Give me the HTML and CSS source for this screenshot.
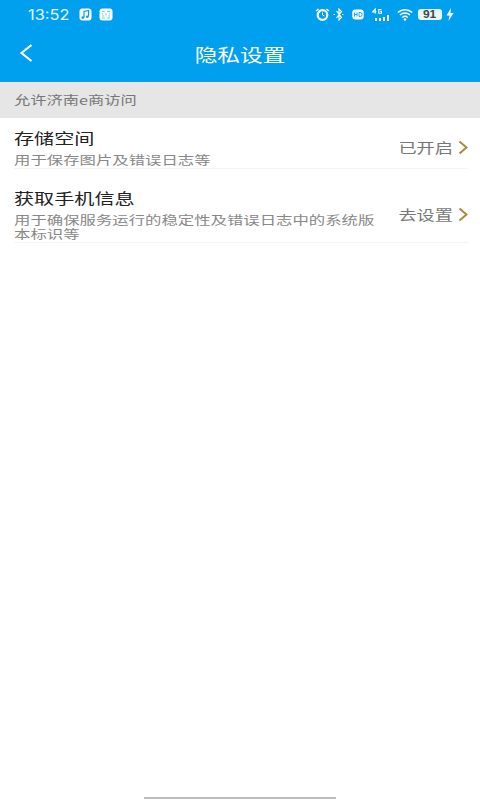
FILE: index.html
```html
<!DOCTYPE html>
<html lang="zh">
<head>
<meta charset="utf-8">
<title>隐私设置</title>
<link rel="stylesheet" href="styles.css">
</head>
<body>
<div class="phone">
  <header class="top">
    <div class="status">
      <div class="status-left">
        <span class="time">13:52</span>
        <svg class="ico" width="13" height="13" viewBox="0 0 13 13"><rect x=".5" y=".5" width="12" height="12" rx="3" fill="#fff"/><path d="M5 9.500V3.500l4.500-1v6" fill="none" stroke="#00a0ee" stroke-width="1.200"/><circle cx="3.800" cy="9.600" r="1.300" fill="#00a0ee"/><circle cx="8.300" cy="8.800" r="1.300" fill="#00a0ee"/></svg>
        <svg class="ico" width="14" height="13" viewBox="0 0 14 13"><rect x=".5" y=".5" width="13" height="12" rx="3" fill="#fff"/><path d="M3 3.500h3M8 3.500h3M3 6h1M6 6h2M10 6h1M3 8h2M6.500 8h1M9 8h2M3 10h3M8 10h3" stroke="#7fcdf5" stroke-width="1.100"/></svg>
      </div>
      <div class="status-right">
        <svg class="s-alarm" width="15" height="13" viewBox="0 0 15 13"><circle cx="7.500" cy="7" r="4.800" fill="none" stroke="#fff" stroke-width="2.200"/><path d="M7.500 4.500V7l2 1" fill="none" stroke="#fff"/><path d="M1 3l2.500-2M14 3l-2.500-2" stroke="#fff" stroke-width="1.500"/></svg>
        <svg class="s-bt" width="11" height="13" viewBox="0 0 11 13"><path d="M3.500 3l5 6.500L6 12V1l2.500 2.500L3.500 10" fill="none" stroke="#fff" stroke-width="1.200"/><path d="M.5 6.500h1.500M9 6.500h1.500" stroke="#fff" stroke-width="1.200"/></svg>
        <svg class="s-hd" width="12" height="11" viewBox="0 0 12 11"><rect x=".3" y=".5" width="11.400" height="10" rx="3" fill="#fff"/><path d="M2.500 3.500v4M2.500 5.500h2.500M5 3.500v4M7 3.500v4h1.200a2 2 0 0 0 0-4z" fill="none" stroke="#00a0ee" stroke-width=".9"/></svg>
        <svg class="s-net" width="19" height="13" viewBox="0 0 19 13"><path d="M4 10v3M8 10v3M12 9v4M16 7v6" stroke="#fff" stroke-width="2"/><path d="M3.200 5.500V1L.6 4h3.800M9.500 1.500H6.800v3.800h2.700V3.200H8" fill="none" stroke="#fff" stroke-width="1.100"/></svg>
        <svg class="s-wifi" width="16" height="13" viewBox="0 0 16 13"><path d="M.8 4.500a10.500 10.500 0 0 1 14.400 0M3 7a7.200 7.200 0 0 1 10 0M5.300 9.500a4 4 0 0 1 5.400 0" fill="none" stroke="#fff" stroke-width="1.500"/><circle cx="8" cy="11.500" r="1.300" fill="#fff"/></svg>
        <span class="battery"><span class="battery-num">91</span></span>
        <svg class="s-bolt" width="8" height="13" viewBox="0 0 8 13"><path d="M5 0 .5 7.500h3L2.500 13l5-8H4.500z" fill="#fff"/></svg>
      </div>
    </div>
    <div class="nav">
      <svg class="back" width="14" height="20" viewBox="0 0 14 20"><path d="M12.500 2 2.500 10l10 8" fill="none" stroke="#fff" stroke-width="2.200"/></svg>
      <h1 class="title">隐私设置</h1>
    </div>
  </header>
  <div class="section"><span class="section-text">允许济南e商访问</span></div>
  <ul class="list">
    <li class="row row-one">
      <div class="main">
        <div class="name">存储空间</div>
        <div class="desc">用于保存图片及错误日志等</div>
      </div>
      <div class="side"><span class="state">已开启</span><svg class="chev" width="10" height="15" viewBox="0 0 10 15"><path d="M1.500 1.500 8.500 7.500l-7 6" fill="none" stroke="#a58a45" stroke-width="2"/></svg></div>
    </li>
    <li class="row row-two">
      <div class="main">
        <div class="name">获取手机信息</div>
        <div class="desc">用于确保服务运行的稳定性及错误日志中的系统版本标识等</div>
      </div>
      <div class="side"><span class="state">去设置</span><svg class="chev" width="10" height="15" viewBox="0 0 10 15"><path d="M1.500 1.500 8.500 7.500l-7 6" fill="none" stroke="#a58a45" stroke-width="2"/></svg></div>
    </li>
  </ul>
  <div class="home"></div>
</div>
</body>
</html>
```
FILE: styles.css
```css
* { box-sizing: border-box; }
html, body { margin: 0; padding: 0; }
body { background: #fff; font-family: "Noto Sans CJK SC", "Noto Sans", sans-serif; }
.phone { width: 480px; height: 800px; position: relative; overflow: hidden; background: #fff; }
.top { background: #00a0ee; height: 82px; color: #fff; }
.status { height: 29px; display: flex; justify-content: space-between; align-items: center; padding: 0 26px 0 28px; }
.status-left { display: flex; align-items: center; gap: 7px; }
.time { font: 14px/16px "Inter", "Liberation Sans", sans-serif; margin-right: 1px; color: #e6f6ff; width: 43px; display: inline-block; transform: scaleX(1.17); transform-origin: left center; }
.status-right { display: flex; align-items: center; }
.s-bt { margin-left: 3px; }
.s-hd { margin-left: 8px; }
.s-net { margin-left: 8px; }
.s-wifi { margin-left: 6px; }
.battery { margin-left: 5px; width: 24px; height: 11px; background: #e9f6fd; border-radius: 3px; display: flex; align-items: center; justify-content: center; }
.s-bolt { margin-left: 4px; }
.battery-num { font: bold 10px/11px "Liberation Sans", sans-serif; color: #444; transform: scaleX(1.200); }
.nav { height: 53px; display: flex; align-items: center; justify-content: center; position: relative; padding-bottom: 4px; }
.back { position: absolute; left: 19px; top: 14px; }
.title { margin: 0; font-size: 18px; font-weight: 400; line-height: 24px; transform: scaleX(1.260); }
.section { height: 36px; background: #e6e6e6; padding: 0 14px 2px; display: flex; align-items: center; font-size: 12.500px; color: #777; }
.section-text { transform: scaleX(1.300); transform-origin: left center; }
.list { list-style: none; margin: 0; padding: 0 12px 0 14px; }
.row { display: flex; justify-content: space-between; align-items: center; border-bottom: 1px solid #f4f4f4; padding-bottom: 1px; }
.row-one { padding-top: 9px; }
.row-two { padding-top: 18px; }
.main { width: 366px; }
.name { font-size: 15px; line-height: 22px; color: #222; transform: scaleX(1.340); transform-origin: left center; }
.desc { width: 268px; font-size: 12px; line-height: 14px; color: #888; margin-top: 4px; transform: scaleX(1.365); transform-origin: left center; }
.side { display: flex; align-items: center; gap: 5px; }
.state { font-size: 14px; line-height: 20px; color: #777; transform: scaleX(1.300); transform-origin: right center; }
.home { position: absolute; left: 144px; top: 797px; width: 192px; height: 2px; background: #bbb; }
```
